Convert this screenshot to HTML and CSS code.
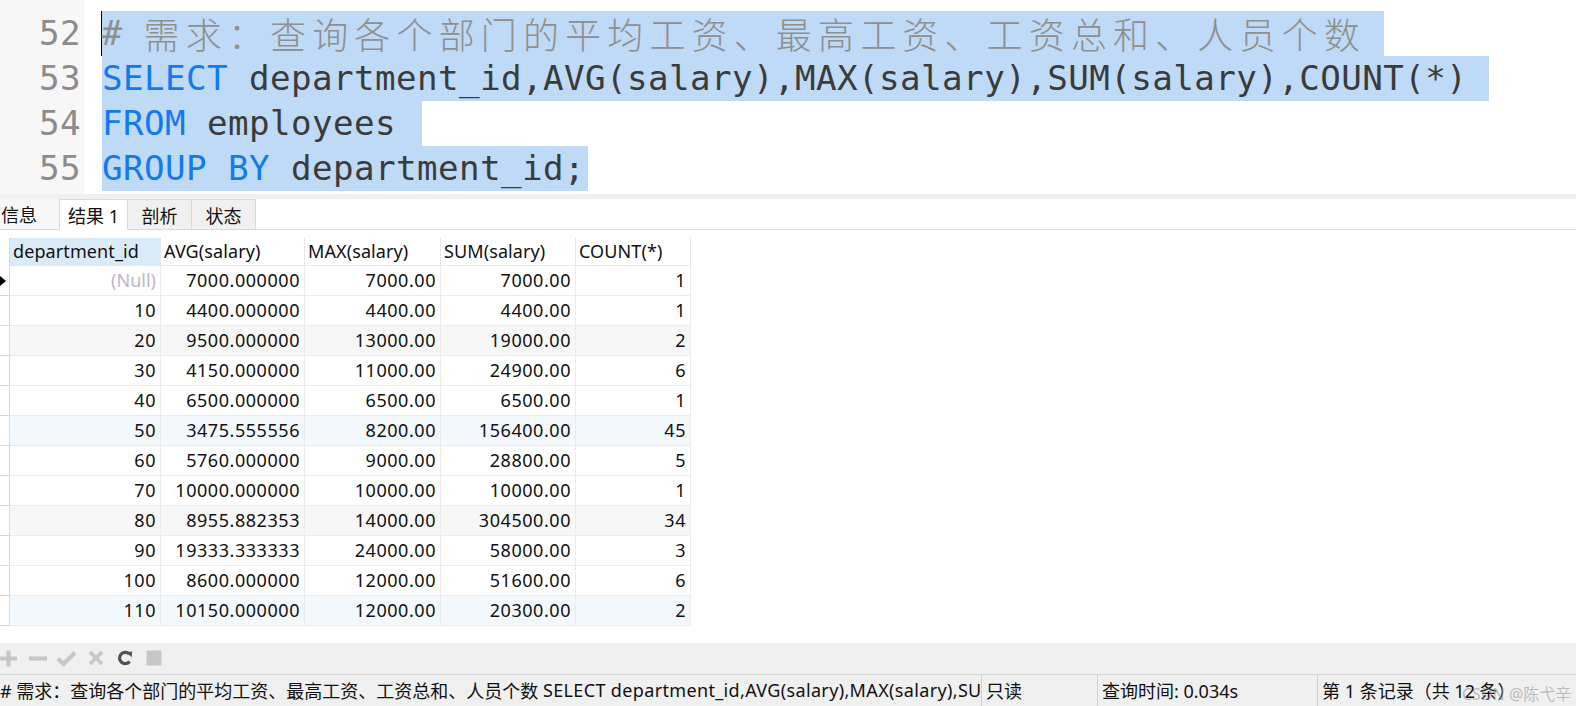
FILE: index.html
```html
<!DOCTYPE html>
<html lang="zh-CN">
<head>
<meta charset="utf-8">
<title>Navicat 查询结果</title>
<link rel="stylesheet" href="styles.css">
</head>
<body>
<div class="app">
  <div class="editor">
    <div class="gutter">
      <div class="lines">
        <div class="ln">51</div>
        <div class="ln">52</div>
        <div class="ln">53</div>
        <div class="ln">54</div>
        <div class="ln">55</div>
      </div>
    </div>
    <div class="code">
      <div class="lines">
        <div class="line"></div>
        <div class="line"><span class="caret"></span><span class="sel sel-cm"><span class="cm"># <span class="cjk">需求：查询各个部门的平均工资、最高工资、工资总和、人员个数</span></span></span></div>
        <div class="line"><span class="sel"><span class="kw">SELECT</span> department_id,AVG(salary),MAX(salary),SUM(salary),COUNT(*)</span></div>
        <div class="line"><span class="sel sel-short"><span class="kw">FROM</span> employees </span></div>
        <div class="line"><span class="sel sel-end"><span class="kw">GROUP BY</span> department_id;</span></div>
      </div>
    </div>
  </div>
  <div class="splitter"></div>
  <div class="tabs">
    <div class="tab tab-first">信息</div>
    <div class="tab tab-active">结果 1</div>
    <div class="tab">剖析</div>
    <div class="tab">状态</div>
  </div>
  <div class="results">
    <div class="grid">
      <div class="ind ind-head"></div>
      <div class="hc hc-sorted">department_id</div>
      <div class="hc">AVG(salary)</div>
      <div class="hc">MAX(salary)</div>
      <div class="hc">SUM(salary)</div>
      <div class="hc">COUNT(*)</div>

      <div class="ind"><span class="arrow"></span></div>
      <div class="c null">(Null)</div><div class="c">7000.000000</div><div class="c">7000.00</div><div class="c">7000.00</div><div class="c">1</div>

      <div class="ind"></div>
      <div class="c">10</div><div class="c">4400.000000</div><div class="c">4400.00</div><div class="c">4400.00</div><div class="c">1</div>

      <div class="ind"></div>
      <div class="c g">20</div><div class="c g">9500.000000</div><div class="c g">13000.00</div><div class="c g">19000.00</div><div class="c g">2</div>

      <div class="ind"></div>
      <div class="c">30</div><div class="c">4150.000000</div><div class="c">11000.00</div><div class="c">24900.00</div><div class="c">6</div>

      <div class="ind"></div>
      <div class="c">40</div><div class="c">6500.000000</div><div class="c">6500.00</div><div class="c">6500.00</div><div class="c">1</div>

      <div class="ind"></div>
      <div class="c b">50</div><div class="c b">3475.555556</div><div class="c b">8200.00</div><div class="c b">156400.00</div><div class="c b">45</div>

      <div class="ind"></div>
      <div class="c">60</div><div class="c">5760.000000</div><div class="c">9000.00</div><div class="c">28800.00</div><div class="c">5</div>

      <div class="ind"></div>
      <div class="c">70</div><div class="c">10000.000000</div><div class="c">10000.00</div><div class="c">10000.00</div><div class="c">1</div>

      <div class="ind"></div>
      <div class="c g">80</div><div class="c g">8955.882353</div><div class="c g">14000.00</div><div class="c g">304500.00</div><div class="c g">34</div>

      <div class="ind"></div>
      <div class="c">90</div><div class="c">19333.333333</div><div class="c">24000.00</div><div class="c">58000.00</div><div class="c">3</div>

      <div class="ind"></div>
      <div class="c">100</div><div class="c">8600.000000</div><div class="c">12000.00</div><div class="c">51600.00</div><div class="c">6</div>

      <div class="ind"></div>
      <div class="c b">110</div><div class="c b">10150.000000</div><div class="c b">12000.00</div><div class="c b">20300.00</div><div class="c b">2</div>
    </div>
  </div>
  <div class="toolbar">
    <span class="tb tb-first"><svg width="17" height="17" viewBox="0 0 17 17"><path d="M8.5 0.5v16M0 8.5h17" stroke="#c6c6c6" stroke-width="4.2" fill="none"/></svg></span>
    <span class="tb"><svg width="18" height="17" viewBox="0 0 18 17"><path d="M0 8.5h18" stroke="#c6c6c6" stroke-width="4.2" fill="none"/></svg></span>
    <span class="tb"><svg width="21" height="17" viewBox="0 0 21 17"><path d="M2 8.5l5.5 5.5L19 2.5" stroke="#c6c6c6" stroke-width="4.2" fill="none"/></svg></span>
    <span class="tb"><svg width="16" height="16" viewBox="0 0 16 16"><path d="M2 2l12 12M14 2L2 14" stroke="#c6c6c6" stroke-width="3.8" fill="none"/></svg></span>
    <span class="tb"><svg width="16" height="16" viewBox="0 0 16 16"><path d="M12.3 4.2A5.6 5.6 0 1 0 12.6 11.4" stroke="#505050" stroke-width="3.2" fill="none"/><path d="M9.4 2.2L15.2 1.4 14.6 7.2z" fill="#505050"/></svg></span>
    <span class="tb"><svg width="16" height="16" viewBox="0 0 16 16"><rect x="0.5" y="0.5" width="15" height="15" fill="#c6c6c6"/></svg></span>
  </div>
  <div class="status">
    <div class="st st-sql"># 需求：查询各个部门的平均工资、最高工资、工资总和、人员个数 <span class="st-lat">SELECT department_id,AVG(salary),MAX(salary),SU</span></div>
    <div class="st st-ro">只读</div>
    <div class="st st-time">查询时间: 0.034s</div>
    <div class="st st-rec">第 1 条记录（共 12 条）</div>
    <div class="watermark">CSDN @陈弋辛</div>
  </div>
</div>
</body>
</html>
```

FILE: styles.css
```css
* { box-sizing: border-box; }

html, body {
  margin: 0;
  padding: 0;
  background: #ffffff;
}

body {
  width: 1576px;
  height: 706px;
  overflow: hidden;
  font-family: "Noto Sans", "Noto Sans CJK SC", sans-serif;
  color: #111;
}

.app {
  display: flex;
  flex-direction: column;
  width: 1576px;
  height: 706px;
  position: relative;
}

/* ---------- editor ---------- */
.editor {
  height: 194px;
  flex: none;
  display: flex;
  overflow: hidden;
  background: #fff;
  font-family: "DejaVu Sans Mono", monospace;
  font-size: 34.2px;
}

.lines {
  margin-top: -34px;
}

.gutter {
  width: 85px;
  flex: none;
  background: #f7f7f7;
}

.ln {
  height: 45px;
  line-height: 45px;
  text-align: right;
  padding-right: 4px;
  color: #8c8c8c;
  letter-spacing: 0.4px;
}

.code {
  flex: 1;
  padding-left: 17px;
  letter-spacing: 0.42px;
}

.line {
  height: 45px;
  line-height: 45px;
  white-space: pre;
  color: #3b3b3b;
}

.sel {
  display: inline-block;
  height: 45px;
  background: #bedaf7;
  padding-right: 22px;
  vertical-align: top;
}

.sel-cm { padding-right: 18px; }
.sel-short { padding-right: 5px; }
.sel-end { padding-right: 3px; }

.caret {
  display: inline-block;
  width: 1px;
  height: 45px;
  margin-left: -1px;
  margin-right: -0.42px;
  background: #000;
  vertical-align: top;
}

.kw { color: #1479ef; }
.cm { color: #8f8f8f; }
.cjk {
  font-family: "Noto Sans CJK SC", sans-serif;
  font-size: 36px;
  letter-spacing: 6.15px;
  font-weight: 300;
  vertical-align: top;
}

/* ---------- splitter & tabs ---------- */
.splitter {
  height: 5px;
  flex: none;
  background: #f0f0f0;
}

.tabs {
  height: 31px;
  flex: none;
  display: flex;
  align-items: flex-end;
  border-bottom: 1px solid #dadada;
  background: #fff;
  font-size: 18px;
}

.tab {
  height: 31px;
  margin-bottom: -1px;
  display: flex;
  align-items: center;
  justify-content: center;
  width: 64px;
  background: #f0f0f0;
  border: 1px solid #d9d9d9;
  border-left: none;
  color: #111;
}

.tab-first {
  width: 59px;
  background: #f7f7f7;
  border: none;
  border-bottom: 1px solid #dadada;
  justify-content: flex-start;
  padding-left: 1px;
}

.tab-active {
  width: 69px;
  background: #fff;
  border-left: 1px solid #d9d9d9;
  border-bottom: 1px solid #fff;
}

/* ---------- result grid ---------- */
.results {
  flex: 1;
  padding-top: 8px;
  background: #fff;
}

.grid {
  display: grid;
  grid-template-columns: 10px 151px 144px 136px 135px 115px;
  grid-template-rows: 28px repeat(12, 30px);
  width: 691px;
  font-size: 18px;
}

.ind {
  border-right: 1px solid #d9d9d9;
  border-bottom: 1px solid #d4d4d4;
  display: flex;
  align-items: center;
}

.ind-head {
  border-bottom: none;
}

.arrow {
  width: 0;
  height: 0;
  border-top: 5px solid transparent;
  border-bottom: 5px solid transparent;
  border-left: 6px solid #000;
}

.hc {
  border-right: 1px solid #e6e6e6;
  border-bottom: 1px solid #e6e6e6;
  display: flex;
  align-items: center;
  padding-left: 3px;
  padding-bottom: 1px;
  white-space: nowrap;
  color: #111;
  letter-spacing: 0.1px;
}

.hc-sorted {
  background: #dbeaf8;
}

.c {
  border-right: 1px solid #ececec;
  border-bottom: 1px solid #ececec;
  display: flex;
  align-items: center;
  justify-content: flex-end;
  padding-right: 4px;
  padding-bottom: 1px;
  letter-spacing: 0.55px;
  white-space: nowrap;
  color: #111;
}

.c.g { background: #f7f7f7; }
.c.b { background: #f3f8fd; }

.c.null {
  color: #b9b9cb;
  letter-spacing: 0;
}

/* ---------- toolbar ---------- */
.toolbar {
  height: 32px;
  flex: none;
  display: flex;
  align-items: center;
  background: #f0f0f0;
  border-bottom: 1px solid #d6d6d6;
  padding-bottom: 1px;
}

.tb {
  width: 29px;
  height: 20px;
  display: flex;
  align-items: center;
  justify-content: center;
}

.tb-first {
  margin-left: -6px;
}

/* ---------- status bar ---------- */
.status {
  height: 31px;
  flex: none;
  display: flex;
  background: #f0f0f0;
  font-size: 18px;
  position: relative;
}

.st {
  display: flex;
  align-items: center;
  white-space: pre;
  overflow: hidden;
  color: #111;
  padding-left: 4px;
  padding-bottom: 2px;
  border-left: 1px solid #d3d3d3;
}

.st-sql {
  width: 981px;
  padding-left: 0;
  border-left: none;
}

.st-lat {
  letter-spacing: 0.35px;
}

.st-ro { width: 116px; }
.st-time { width: 220px; }
.st-rec { flex: 1; }

.watermark {
  position: absolute;
  left: 1462px;
  top: 6px;
  font-size: 16px;
  color: rgba(140, 140, 140, 0.55);
  white-space: nowrap;
  pointer-events: none;
}
```
